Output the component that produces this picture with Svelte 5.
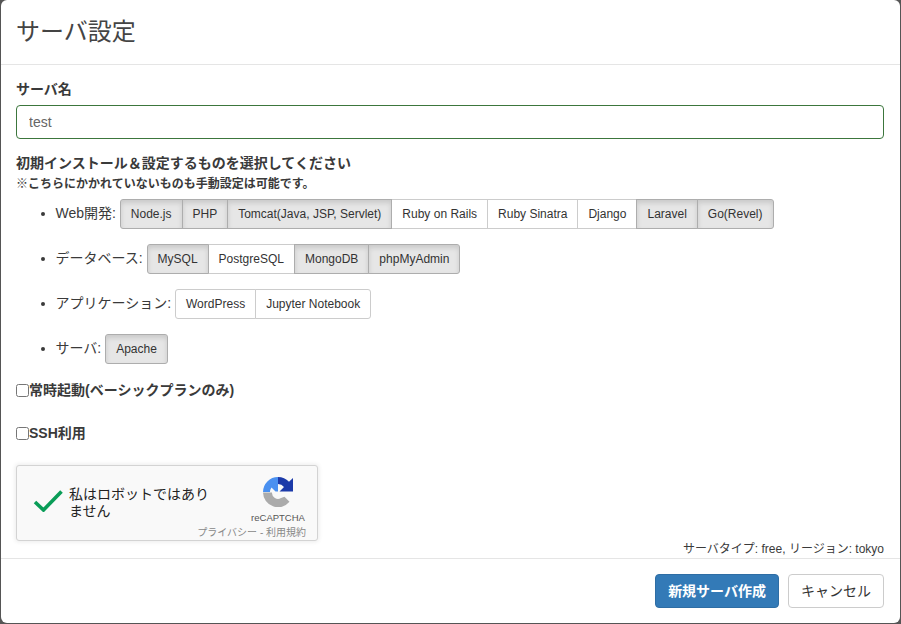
<script>
  const groups = [
    { label: 'Web開発:', items: [['Node.js',1],['PHP',1],['Tomcat(Java, JSP, Servlet)',1],['Ruby on Rails',0],['Ruby Sinatra',0],['Django',0],['Laravel',1],['Go(Revel)',1]] },
    { label: 'データベース:', items: [['MySQL',1],['PostgreSQL',0],['MongoDB',1],['phpMyAdmin',1]] },
    { label: 'アプリケーション:', items: [['WordPress',0],['Jupyter Notebook',0]] },
    { label: 'サーバ:', items: [['Apache',1]] }
  ];
</script>

<div class="modal">
  <header class="head"><h4>サーバ設定</h4></header>
  <div class="body">
    <div class="group">
      <label class="lbl" for="name">サーバ名</label>
      <input id="name" class="input" value="test" />
    </div>
    <div class="lbl second">初期インストール＆設定するものを選択してください</div>
    <div class="note">※こちらにかかれていないものも手動設定は可能です。</div>
    <ul class="list">
      {#each groups as g}
        <li>
          {g.label}
          <span class="btns">
            {#each g.items as [name, on]}
              <button class="btn" class:on>{name}</button>
            {/each}
          </span>
        </li>
      {/each}
    </ul>
    <label class="chk first"><input type="checkbox" />常時起動(ベーシックプランのみ)</label>
    <label class="chk second-chk"><input type="checkbox" />SSH利用</label>
    <div class="captcha">
      <div class="cap-top">
        <svg class="tick" width="30" height="22" viewBox="0 0 30 22"><path d="M2 12 L10.5 20 L28.5 1.5" fill="none" stroke="#0a9d58" stroke-width="3.6"/></svg>
        <div class="cap-text">私はロボットではありません</div>
        <div class="cap-logo">
          <svg width="30" height="30" viewBox="0 0 30 30">
            <path d="M15 0 A15 15 0 0 0 0 15 L7 15 A8 8 0 0 1 8.5 10.5 L12.5 14.5 L15 14.5Z" fill="#4a90f0"/>
            <path d="M15 0 A15 15 0 0 1 26 4.8 L30 1 L30 14.5 L16.5 14.5 L21 10 A8 8 0 0 0 15 7 Z" fill="#1c3aa9"/>
            <path d="M0 15.5 A15 15 0 0 0 26.5 24.8 L21.5 19.8 L18 21 A6 6 0 0 1 9 15.5 Z" fill="#ababab"/>
          </svg>
          <span>reCAPTCHA</span>
        </div>
      </div>
      <div class="cap-foot">プライバシー - 利用規約</div>
    </div>
    <div class="type">サーバタイプ: free, リージョン: tokyo</div>
  </div>
  <footer class="foot">
    <button class="act primary">新規サーバ作成</button>
    <button class="act">キャンセル</button>
  </footer>
</div>

<style>
  :global(body) {
    margin: 0;
    background: #555;
    overflow: hidden;
  }
  .modal {
    width: 899px;
    height: 623px;
    margin-left: 1px;
    background: #fff;
    border-radius: 6px;
    box-sizing: border-box;
    font-family: "Liberation Sans", "Noto Sans CJK JP", sans-serif;
    font-size: 14px;
    line-height: 20px;
    color: #3a3a3a;
    display: flex;
    flex-direction: column;
  }
  .head {
    padding: 15px;
    border-bottom: 1px solid #e5e5e5;
  }
  h4 {
    margin: 0;
    font-size: 24px;
    font-weight: 400;
    line-height: 34px;
    color: #444;
  }
  .body {
    flex: 1;
    min-height: 0;
    padding: 15px 16px 0 15px;
  }
  .group {
    margin-bottom: 15px;
  }
  .lbl {
    display: block;
    font-weight: 700;
    margin-top: -1px;
    margin-bottom: 6px;
  }
  .second {
    margin-bottom: 0;
  }
  .input {
    display: block;
    box-sizing: border-box;
    width: 100%;
    height: 34px;
    padding: 6px 12px;
    font: inherit;
    color: #666;
    border: 1px solid #3c763d;
    border-radius: 4px;
    outline: none;
  }
  .note {
    font-size: 12px;
    font-weight: 700;
    line-height: 17px;
    margin-top: 3px;
  }
  .list {
    margin: 6px 0 0;
    padding: 0 0 0 39.5px;
  }
  .list li {
    height: 30px;
    margin-bottom: 15px;
    line-height: 28px;
    white-space: nowrap;
  }
  .list li:last-child {
    margin-bottom: 0;
  }
  .btns {
    display: inline-flex;
    vertical-align: top;
  }
  .btn {
    height: 30px;
    padding: 5px 10px;
    margin-left: -1px;
    font: 12px/18px "Liberation Sans", "Noto Sans CJK JP", sans-serif;
    color: #333;
    background: #fff;
    border: 1px solid #ccc;
    border-radius: 0;
  }
  .btn:first-child {
    margin-left: 0;
    border-radius: 3px 0 0 3px;
  }
  .btn:last-child {
    border-radius: 0 3px 3px 0;
  }
  .btn:only-child {
    border-radius: 3px;
  }
  .btn.on {
    position: relative;
    background: #e6e6e6;
    border-color: #adadad;
    box-shadow: inset 0 3px 5px rgba(0, 0, 0, 0.125);
  }
  .chk {
    display: flex;
    align-items: center;
    height: 20px;
    font-weight: 700;
  }
  .chk.first {
    margin-top: 16px;
  }
  .chk.second-chk {
    margin-top: 23px;
  }
  .chk input {
    width: 13px;
    height: 13px;
    margin: 0;
  }
  .captcha {
    box-sizing: border-box;
    width: 302px;
    height: 76px;
    margin-top: 22px;
    background: #f9f9f9;
    border: 1px solid #d3d3d3;
    border-radius: 3px;
    box-shadow: 0 0 4px 1px rgba(0, 0, 0, 0.08);
    display: flex;
    flex-direction: column;
  }
  .cap-top {
    flex: 1;
    display: flex;
    min-height: 0;
  }
  .tick {
    margin: 24px 0 0 16px;
    flex: none;
  }
  .cap-text {
    width: 150px;
    margin: 20px 0 0 6px;
    line-height: 17px;
    color: #222;
  }
  .cap-logo {
    margin: 11px 0 0 auto;
    width: 78px;
    display: flex;
    flex-direction: column;
    align-items: center;
  }
  .cap-logo span {
    font-size: 9.5px;
    line-height: 12px;
    margin-top: 5px;
    color: #555;
  }
  .cap-foot {
    font-size: 10px;
    line-height: 12px;
    text-align: right;
    color: #888;
    padding: 0 11px 1px 0;
  }
  .type {
    font-size: 12px;
    line-height: 17px;
    text-align: right;
  }
  .foot {
    padding: 15px 16px 15px 15px;
    border-top: 1px solid #e5e5e5;
    display: flex;
    justify-content: flex-end;
    gap: 9px;
  }
  .act {
    height: 34px;
    padding: 6px 12px;
    font: 14px/20px "Liberation Sans", "Noto Sans CJK JP", sans-serif;
    color: #333;
    background: #fff;
    border: 1px solid #ccc;
    border-radius: 4px;
  }
  .primary {
    font-weight: 700;
    color: #fff;
    background: #337ab7;
    border-color: #2e6da4;
  }
</style>
